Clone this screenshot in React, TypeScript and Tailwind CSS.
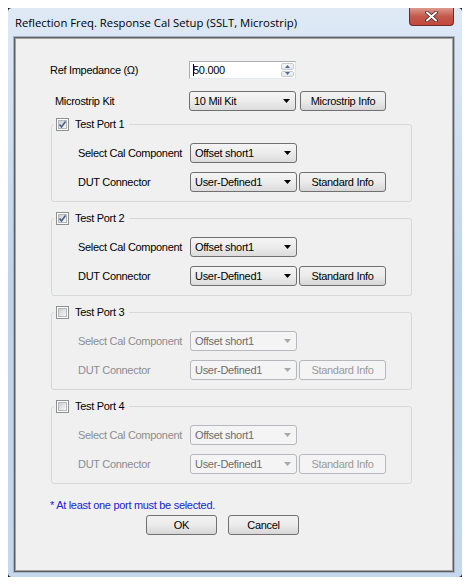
import React from "react";

const FONT = "font-['Liberation_Sans',Arial,sans-serif]";

function CheckBox({ checked }: { checked: boolean }) {
  return (
    <span className="relative inline-flex w-[13px] h-[13px] shrink-0 border border-[#8e8f8f] bg-white p-[1px]">
      <span className="flex-1 border border-[#b3b8bd] bg-linear-to-br from-[#cbcfd5] to-[#f7f7f7]" />
      {checked && (
        <svg className="absolute left-0 top-0" width="11" height="11" viewBox="0 0 11 11">
          <path d="M2.5 5.5 L4.5 8 L8.5 2.5" fill="none" stroke="#4b5f89" strokeWidth="1.6" />
        </svg>
      )}
    </span>
  );
}

function Combo({ text, disabled }: { text: string; disabled?: boolean }) {
  return (
    <div
      className={`flex items-center h-[20px] w-[107px] shrink-0 rounded-[3px] border pl-[4px] pr-[4px] ${
        disabled
          ? "border-[#b5b9bd] bg-[#f4f4f4] text-[#6d6d6d]"
          : "border-[#707070] bg-linear-to-b from-[#f5f5f5] via-[#ececec] to-[#dcdcdc] text-black"
      }`}
    >
      <span className="flex-1 truncate">{text}</span>
      <svg width="7" height="4" viewBox="0 0 7 4" className="mr-[1px]">
        <path d="M0 0 H7 L3.5 4 Z" fill={disabled ? "#a8a8a8" : "#000"} />
      </svg>
    </div>
  );
}

function Btn({ text, w, disabled }: { text: string; w: string; disabled?: boolean }) {
  return (
    <div
      className={`flex items-center justify-center h-[20px] ${w} shrink-0 rounded-[3px] border ${
        disabled
          ? "border-[#b5b9bd] bg-[#f4f4f4] text-[#9a9a9a]"
          : "border-[#707070] bg-linear-to-b from-[#f2f2f2] via-[#ebebeb] to-[#d6d6d6] text-black"
      }`}
    >
      {text}
    </div>
  );
}

function PortGroup({ n, checked }: { n: number; checked: boolean }) {
  const dis = !checked;
  return (
    <fieldset className="ml-[1px] w-[361px] rounded-[3px] border border-[#d5d9dc] pb-[9px] mt-[9px] first-of-type:mt-[6px]">
      <legend className="ml-[2px] px-[2px] h-[14px] flex items-center gap-[6px]">
        <CheckBox checked={checked} />
        <span className="text-black pr-[3px]">Test Port {n}</span>
      </legend>
      <div className="mt-[12px] pl-[26px] flex items-center h-[20px]">
        <span className={`w-[112px] ${dis ? "text-[#8d8d8d]" : "text-black"}`}>Select Cal Component</span>
        <Combo text="Offset short1" disabled={dis} />
      </div>
      <div className="mt-[9px] pl-[26px] flex items-center h-[20px]">
        <span className={`w-[112px] ${dis ? "text-[#8d8d8d]" : "text-black"}`}>DUT Connector</span>
        <Combo text="User-Defined1" disabled={dis} />
        <div className="ml-[2px]">
          <Btn text="Standard Info" w="w-[87px]" disabled={dis} />
        </div>
      </div>
    </fieldset>
  );
}

export default function App() {
  return (
    <div className={`w-[470px] h-[586px] bg-white pt-[8px] pl-[8px] ${FONT} text-[11px] tracking-[-0.3px] leading-[13px]`}>
      <div className="w-[454px] h-[569px] bg-[#1a1a1a]">
        <div className="w-full h-full rounded-[4px] bg-linear-to-b from-[#dfe9f6] via-[#bdd3ec] to-[#c5d8ee] flex flex-col pl-[5px] pr-[7px] pb-[4px]">
          <div className="h-[28px] flex items-start">
            <div className="flex-1 pl-[2px] pt-[7px] font-['Open_Sans',sans-serif] text-[11.3px] tracking-normal leading-[16px] text-black">
              Reflection Freq. Response Cal Setup (SSLT, Microstrip)
            </div>
            <div className="w-[45px] h-[18px] mr-[1px] rounded-b-[4px] border border-t-0 border-[#6d2b2b] bg-linear-to-b from-[#dc9a8e] via-[#c2594c] to-[#c4473c] flex items-center justify-center">
              <svg width="13" height="11" viewBox="0 0 13 11">
                <path d="M2 1.5 L11 9.5 M11 1.5 L2 9.5" stroke="#4a2020" strokeWidth="3.6" strokeLinecap="round" />
                <path d="M2 1.5 L11 9.5 M11 1.5 L2 9.5" stroke="#ffffff" strokeWidth="2" strokeLinecap="round" />
              </svg>
            </div>
          </div>
          <div className="flex-1 border border-[#a9b4c0] shadow-[inset_0_0_0_1px_#5c5f63,inset_0_0_0_2px_#a3a3a3] bg-[#f0f0f0] p-[2px]">
            <div className="pt-[22px] pl-[34px] text-black">
              <div className="flex items-center h-[18px]">
                <span className="w-[139px]">Ref Impedance (Ω)</span>
                <div className="flex items-stretch h-[18px] w-[107px] border border-[#abadb3] border-r-[#dbdfe6] border-b-[#e3e9ef] bg-white">
                  <div className="flex-1 flex items-center pl-[3px] relative">
                    <span className="absolute left-[3px] top-[2px] w-[1px] h-[12px] bg-black" />
                    <span>50.000</span>
                  </div>
                  <div className="w-[15px] flex flex-col p-[1px] gap-[1px]">
                    <div className="flex-1 flex items-center justify-center border border-[#c6cad0] bg-linear-to-b from-[#f7f7f7] to-[#e3e6ea] rounded-[2px]">
                      <svg width="5" height="3" viewBox="0 0 5 3"><path d="M0 3 H5 L2.5 0 Z" fill="#4c6a9b" /></svg>
                    </div>
                    <div className="flex-1 flex items-center justify-center border border-[#c6cad0] bg-linear-to-b from-[#f7f7f7] to-[#e3e6ea] rounded-[2px]">
                      <svg width="5" height="3" viewBox="0 0 5 3"><path d="M0 0 H5 L2.5 3 Z" fill="#4c6a9b" /></svg>
                    </div>
                  </div>
                </div>
              </div>
              <div className="mt-[12px] flex items-center h-[20px]">
                <span className="w-[139px] pl-[5px]">Microstrip Kit</span>
                <Combo text="10 Mil Kit" />
                <div className="ml-[4px]">
                  <Btn text="Microstrip Info" w="w-[86px]" />
                </div>
              </div>
              <PortGroup n={1} checked={true} />
              <PortGroup n={2} checked={true} />
              <PortGroup n={3} checked={false} />
              <PortGroup n={4} checked={false} />
              <div className="mt-[15px] text-[#2020d8]">* At least one port must be selected.</div>
              <div className="mt-[3px] ml-[96px] flex gap-[11px]">
                <Btn text="OK" w="w-[71px]" />
                <Btn text="Cancel" w="w-[71px]" />
              </div>
            </div>
          </div>
        </div>
      </div>
    </div>
  );
}
